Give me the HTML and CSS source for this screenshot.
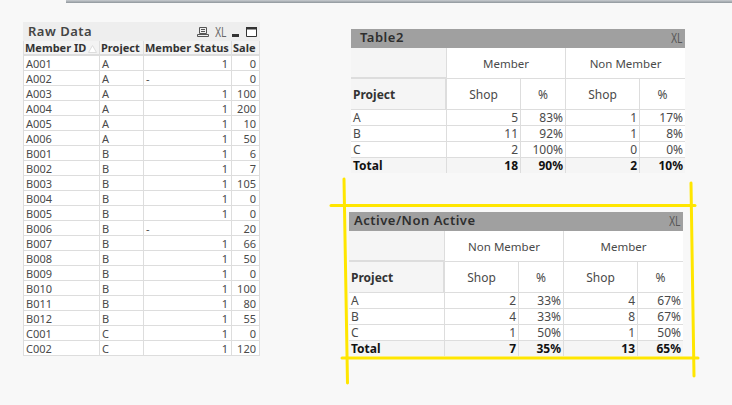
FILE: index.html
```
<!DOCTYPE html>
<html lang="en">
<head>
<meta charset="utf-8">
<title>Raw Data</title>
<link rel="stylesheet" href="styles.css">
</head>
<body>
<div class="topbar"></div>

<section class="box raw">
  <header class="title title-light">
    <span class="title-text">Raw Data</span>
    <span class="tools">
      <svg class="ico" width="12" height="10" viewBox="0 0 12 10"><path d="M2.5 .5h7v6h-7zM4 2.5h4M4 4.5h4M.5 7.5h11v2H.5z" fill="none" stroke="#555"/></svg>
      <span class="xl">XL</span>
      <svg class="ico ico-min" width="8" height="10" viewBox="0 0 8 10"><rect x="0" y="7" width="7" height="3" fill="#333"/></svg>
      <svg class="ico ico-max" width="11" height="10" viewBox="0 0 11 10"><path d="M.5 .5h10v9H.5z" fill="#fff" stroke="#333"/><rect x="0" y="0" width="11" height="2.5" fill="#333"/></svg>
    </span>
  </header>
  <table class="grid">
    <colgroup><col class="c-id"><col class="c-proj"><col class="c-status"><col class="c-sale"></colgroup>
    <thead>
      <tr><th>Member ID<svg class="sort" width="9" height="8" viewBox="0 0 9 8"><path d="M4.5 .5L8.5 7.5H.5z" fill="#fff" stroke="#ddd"/></svg></th><th>Project</th><th>Member Status</th><th>Sale</th></tr>
    </thead>
    <tbody>
      <tr><td>A001</td><td>A</td><td class="n">1</td><td class="n">0</td></tr>
      <tr><td>A002</td><td>A</td><td>-</td><td class="n">0</td></tr>
      <tr><td>A003</td><td>A</td><td class="n">1</td><td class="n">100</td></tr>
      <tr><td>A004</td><td>A</td><td class="n">1</td><td class="n">200</td></tr>
      <tr><td>A005</td><td>A</td><td class="n">1</td><td class="n">10</td></tr>
      <tr><td>A006</td><td>A</td><td class="n">1</td><td class="n">50</td></tr>
      <tr><td>B001</td><td>B</td><td class="n">1</td><td class="n">6</td></tr>
      <tr><td>B002</td><td>B</td><td class="n">1</td><td class="n">7</td></tr>
      <tr><td>B003</td><td>B</td><td class="n">1</td><td class="n">105</td></tr>
      <tr><td>B004</td><td>B</td><td class="n">1</td><td class="n">0</td></tr>
      <tr><td>B005</td><td>B</td><td class="n">1</td><td class="n">0</td></tr>
      <tr><td>B006</td><td>B</td><td>-</td><td class="n">20</td></tr>
      <tr><td>B007</td><td>B</td><td class="n">1</td><td class="n">66</td></tr>
      <tr><td>B008</td><td>B</td><td class="n">1</td><td class="n">50</td></tr>
      <tr><td>B009</td><td>B</td><td class="n">1</td><td class="n">0</td></tr>
      <tr><td>B010</td><td>B</td><td class="n">1</td><td class="n">100</td></tr>
      <tr><td>B011</td><td>B</td><td class="n">1</td><td class="n">80</td></tr>
      <tr><td>B012</td><td>B</td><td class="n">1</td><td class="n">55</td></tr>
      <tr><td>C001</td><td>C</td><td class="n">1</td><td class="n">0</td></tr>
      <tr><td>C002</td><td>C</td><td class="n">1</td><td class="n">120</td></tr>
    </tbody>
  </table>
</section>

<section class="box pivot table2">
  <header class="title title-dark">
    <span class="title-text">Table2</span>
    <span class="xl">XL</span>
  </header>
  <table class="pt">
    <colgroup><col class="p-label"><col class="p-shop"><col class="p-pct"><col class="p-shop"><col class="p-pct"></colgroup>
    <thead>
      <tr class="h"><th class="corner"></th><th class="dim" colspan="2">Member</th><th class="dim end" colspan="2">Non Member</th></tr>
      <tr class="h"><th class="rowhead">Project</th><th class="sub">Shop</th><th class="sub">%</th><th class="sub">Shop</th><th class="sub end">%</th></tr>
    </thead>
    <tbody>
      <tr><td class="l">A</td><td>5</td><td>83%</td><td>1</td><td class="end">17%</td></tr>
      <tr><td class="l">B</td><td>11</td><td>92%</td><td>1</td><td class="end">8%</td></tr>
      <tr><td class="l">C</td><td>2</td><td>100%</td><td>0</td><td class="end">0%</td></tr>
      <tr class="total"><td class="l">Total</td><td>18</td><td>90%</td><td>2</td><td class="end">10%</td></tr>
    </tbody>
  </table>
</section>

<section class="box pivot table3">
  <header class="title title-dark">
    <span class="title-text">Active/Non Active</span>
    <span class="xl">XL</span>
  </header>
  <table class="pt">
    <colgroup><col class="p-label"><col class="p-shop"><col class="p-pct"><col class="p-shop"><col class="p-pct"></colgroup>
    <thead>
      <tr class="h"><th class="corner"></th><th class="dim" colspan="2">Non Member</th><th class="dim end" colspan="2">Member</th></tr>
      <tr class="h"><th class="rowhead">Project</th><th class="sub">Shop</th><th class="sub">%</th><th class="sub">Shop</th><th class="sub end">%</th></tr>
    </thead>
    <tbody>
      <tr><td class="l">A</td><td>2</td><td>33%</td><td>4</td><td class="end">67%</td></tr>
      <tr><td class="l">B</td><td>4</td><td>33%</td><td>8</td><td class="end">67%</td></tr>
      <tr><td class="l">C</td><td>1</td><td>50%</td><td>1</td><td class="end">50%</td></tr>
      <tr class="total"><td class="l">Total</td><td>7</td><td>35%</td><td>13</td><td class="end">65%</td></tr>
    </tbody>
  </table>
</section>

<svg class="marks" width="732" height="405" viewBox="0 0 732 405">
  <g stroke="#ffe600" stroke-width="3" stroke-linecap="round" fill="none">
    <path d="M331 205.5H695"/>
    <path d="M342 358H698"/>
    <path d="M344 179L347.5 383"/>
    <path d="M691 183L694 376"/>
  </g>
</svg>
</body>
</html>
```
FILE: styles.css
```
* { box-sizing: border-box; }
html, body { margin: 0; height: 100%; }
body {
  position: relative;
  width: 732px;
  height: 405px;
  overflow: hidden;
  background: #f8f8f8;
  font-family: "Noto Sans", "Liberation Sans", sans-serif;
  color: #333;
}
.topbar {
  position: absolute;
  left: 66px;
  top: 0;
  width: 666px;
  height: 3px;
  background: linear-gradient(#c8ccd0, #8f969c);
}
.box { position: absolute; }
.raw { left: 23px; top: 22px; width: 237px; }
.table2 { left: 351px; top: 29px; width: 334px; }
.table3 { left: 349px; top: 212px; width: 334px; }

.title {
  display: flex;
  align-items: center;
  justify-content: space-between;
  height: 19px;
}
.title-light { background: #eeeeee; padding: 0 3px 0 5px; color: #444; }
.title-dark { background: #a0a0a0; color: #2e2e2e; padding: 0 3px 2px 9px; }
.table3 .title-dark { padding-left: 5px; }
.title-text { font-size: 13px; font-weight: 600; letter-spacing: .5px; line-height: 17px; white-space: nowrap; }
.tools { display: flex; align-items: center; gap: 6px; }
.ico { display: block; }
.xl {
  display: inline-block;
  width: 11px;
  font-family: "Liberation Sans", sans-serif;
  font-size: 15px;
  line-height: 12px;
  color: #666;
  white-space: nowrap;
  transform: scaleX(.62);
  transform-origin: left center;
}
.title-dark .xl { color: #555; }

.grid, .pt {
  border-collapse: separate;
  border-spacing: 0;
  table-layout: fixed;
  width: 100%;
}
.grid { font-size: 11px; line-height: 13px; background: #fff; }
.c-id { width: 77px; }
.c-proj { width: 44px; }
.c-status { width: 88px; }
.c-sale { width: 28px; }
.grid th, .grid td {
  height: 15px;
  padding: 1px 2px 0;
  border-right: 1px solid #dddddd;
  border-bottom: 1px solid #dddddd;
  white-space: nowrap;
  overflow: hidden;
  font-weight: 400;
  text-align: left;
  color: #4a4a4a;
}
.grid th {
  background: #f3f3f3;
  font-weight: 700;
  color: #333;
  border-bottom-width: 2px;
  padding: 0 1px;
  height: 15px;
}
.grid tr > :first-child { border-left: 1px solid #dddddd; }
.grid .n { text-align: right; padding-right: 3px; }
.sort { margin-left: 2px; vertical-align: -1px; }

.pt { font-size: 12px; line-height: 14px; background: #fff; }
.p-label { width: 96px; }
.p-shop { width: 74px; }
.p-pct { width: 45px; }
.pt th, .pt td {
  padding: 0 2px;
  border-right: 1px solid #dddddd;
  border-bottom: 1px solid #dddddd;
  white-space: nowrap;
  color: #4a4a4a;
  font-weight: 400;
}
.pt .h th { height: 31px; text-align: center; padding-top: 2px; }
.pt .h .dim { font-size: 11.5px; }
.pt .h .sub { font-size: 12px; }
.pt td { height: 16px; text-align: right; }
.pt .end { border-right: 0; }
.pt td.l { text-align: left; }
.pt .corner { background: #f5f5f5; border-bottom: 2px solid #dddddd; }
.pt .h .rowhead {
  background: #f5f5f5;
  text-align: left;
  font-weight: 700;
  color: #333;
  border-right: 2px solid #dddddd;
}
.pt .total td {
  background: #f5f5f5;
  font-weight: 700;
  color: #111;
  height: 15px;
  border-bottom: 0;
}
.marks { position: absolute; left: 0; top: 0; pointer-events: none; }
```
